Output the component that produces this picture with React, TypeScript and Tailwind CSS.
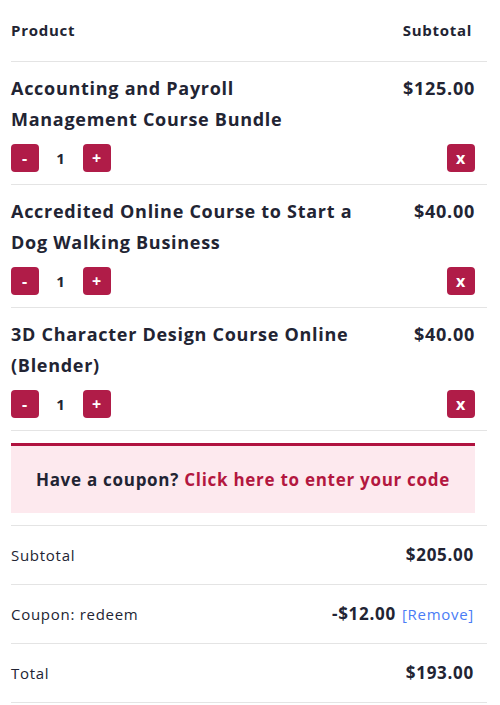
import React from 'react';

interface CartItem {
  id: number;
  lines: string[];
  price: string;
  qty: number;
}

// titles are kept in the two lines they wrap to in the shop's layout
const items: CartItem[] = [
  { id: 1, lines: ['Accounting and Payroll', 'Management Course Bundle'], price: '$125.00', qty: 1 },
  { id: 2, lines: ['Accredited Online Course to Start a', 'Dog Walking Business'], price: '$40.00', qty: 1 },
  { id: 3, lines: ['3D Character Design Course Online', '(Blender)'], price: '$40.00', qty: 1 },
];

const SquareBtn: React.FC<{ label: string }> = ({ label }) => (
  <button className="w-7 h-7 rounded-[4px] bg-[#b01c48] text-white font-bold text-[16px] leading-none flex items-center justify-center">
    {label}
  </button>
);

const App: React.FC = () => {
  return (
    <div className="w-[500px] min-h-[705px] bg-white text-[#222433] font-['Open_Sans',sans-serif] tracking-[0.045em]">
      <div className="pl-[11px] pr-[13px]">
        {/* header */}
        <div className="h-[62px] flex items-center justify-between border-b border-[#e4e4e4] pr-[15px] text-[15px] font-bold">
          <span>Product</span>
          <span>Subtotal</span>
        </div>

        {items.map(item => (
          <div key={item.id} className="pt-[11px] pb-[12px] border-b border-[#e4e4e4]">
            <div className="flex justify-between pr-[12px]">
              <div className="text-[18px] leading-[31px] font-bold">
                {item.lines.map(l => (
                  <span key={l} className="block">{l}</span>
                ))}
              </div>
              <div className="text-[18px] leading-[31px] font-bold">{item.price}</div>
            </div>
            <div className="mt-[9px] flex items-center justify-between pr-[12px]">
              <div className="flex items-center">
                <SquareBtn label="-" />
                <span className="w-[44px] text-center text-[15px] font-bold">{item.qty}</span>
                <SquareBtn label="+" />
              </div>
              <SquareBtn label="x" />
            </div>
          </div>
        ))}

        {/* coupon notice */}
        <div className="mt-[12px] mr-[12px] h-[70px] border-t-[3px] border-[#b0123f] bg-[#fde9ee] flex items-center justify-center text-[17px] font-bold">
          <span>
            Have a coupon? <a className="text-[#b3173f] cursor-pointer">Click here to enter your code</a>
          </span>
        </div>

        {/* totals */}
        <div className="mt-[12px] border-t border-[#e4e4e4]">
          <div className="h-[59px] flex items-center justify-between border-b border-[#e4e4e4] pr-[13px]">
            <span className="text-[15px]">Subtotal</span>
            <span className="text-[17px] font-bold">$205.00</span>
          </div>
          <div className="h-[59px] flex items-center justify-between border-b border-[#e4e4e4] pr-[13px]">
            <span className="text-[15px]">Coupon: redeem</span>
            <span className="flex items-baseline gap-[6px]">
              <span className="text-[17px] font-bold">-$12.00</span>
              <a className="text-[15px] text-[#4a7cf6] cursor-pointer">[Remove]</a>
            </span>
          </div>
          <div className="h-[59px] flex items-center justify-between border-b border-[#e4e4e4] pr-[13px]">
            <span className="text-[15px]">Total</span>
            <span className="text-[17px] font-bold">$193.00</span>
          </div>
        </div>
      </div>
    </div>
  );
};

export default App;
